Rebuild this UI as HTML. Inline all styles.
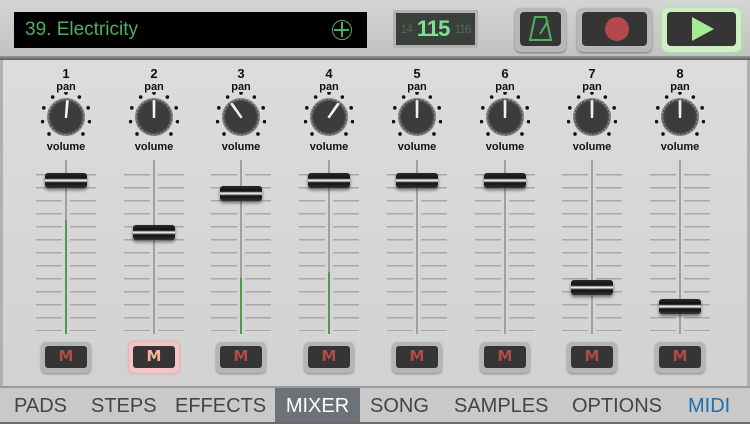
<!DOCTYPE html>
<html><head><meta charset="utf-8"><style>
*{margin:0;padding:0;box-sizing:border-box}
body{width:750px;height:422px;overflow:hidden;background:#6a6a6a;font-family:"Liberation Sans",sans-serif;position:relative}
#top{position:absolute;left:0;top:0;width:750px;height:58px;background:linear-gradient(#d4d4d4,#c2c2c2);border-bottom:2px solid #8a8a8a}
#name{position:absolute;left:14px;top:12px;width:353px;height:36px;background:#000;color:#4fae62;font-size:19px;line-height:36px;padding-left:11px}
#plus{position:absolute;right:15px;top:8px;width:20px;height:20px;border:1.5px solid #4fae62;border-radius:50%}
#plus:before{content:"";position:absolute;left:8px;top:1px;width:1.5px;height:15px;background:#4fae62}
#plus:after{content:"";position:absolute;top:8px;left:1px;height:1.5px;width:15px;background:#4fae62}
#bpm{position:absolute;left:393px;top:10px;width:85px;height:38px;background:#b2b2b2;border-radius:2px}
#bpm div{position:absolute;left:3px;top:3px;right:3px;bottom:3px;background:#3a3f3c;color:#7de28f;font-family:"Liberation Sans",sans-serif;text-align:center;line-height:32px;font-size:22px;font-weight:bold;white-space:nowrap;letter-spacing:-1px}
#bpm span{font-size:12px;color:#4a6a52;font-weight:normal;vertical-align:3px}
.btn{position:absolute;top:8px;height:44px;border-radius:6px;background:#b8b8b8;box-shadow:0 1px 2px #777}
.btn div{position:absolute;left:5px;top:4px;right:5px;bottom:6px;background:#353535;border-radius:4px}
#main{position:absolute;left:0;top:60px;width:750px;height:326px;background:linear-gradient(#dcdcdc,#d2d2d2);border-left:3px solid #b0b0b0;border-right:3px solid #b0b0b0}
.ch{position:absolute;top:0;width:88px;height:326px}
.num{position:absolute;width:88px;text-align:center;top:6px;font-weight:bold;font-size:13px;color:#111}
.pan{position:absolute;width:88px;text-align:center;top:21px;font-weight:bold;font-size:11px;color:#111}
.vol{position:absolute;width:88px;text-align:center;top:81px;font-weight:bold;font-size:11px;color:#111}
.knob{position:absolute;left:19px;top:32px}
.ticks{position:absolute;top:103px;height:168px;width:26px;background:repeating-linear-gradient(to bottom,transparent 0,transparent 11px,#a8a8a8 11px,#a8a8a8 12.5px,transparent 12.5px,transparent 13px)}
.track{position:absolute;left:43px;top:100px;width:2px;height:174px;background:#a0a0a0}
.lvl{position:absolute;left:43px;width:2px;background:#4e9a50;bottom:52px}
.cap{position:absolute;left:23px;width:42px;height:15px;border-radius:3px;background:linear-gradient(#2a2a2a,#111 35%,#999 42%,#fff 50%,#888 58%,#111 66%,#333);box-shadow:0 2px 3px rgba(0,0,0,.5)}
.m{position:absolute;left:19px;top:282px;width:50px;height:31px;border-radius:5px;background:#b5b5b5;box-shadow:0 1px 2px #888}
.m div{position:absolute;left:4px;top:4px;right:4px;bottom:5px;background:#353535;border-radius:3px;color:#b04c48;font-weight:bold;font-size:15px;text-align:center;line-height:21px;font-family:"DejaVu Sans","Liberation Sans",sans-serif}
.m.on{background:#f2c6c2;box-shadow:0 0 3px #e88}
.m.on div{color:#f1b896}
#tabs{position:absolute;left:0;top:386px;width:750px;height:36px;background:#c9c9c9;border-top:2px solid #9a9a9a}
#tabs span{position:absolute;top:0;height:34px;line-height:36px;font-size:20px;color:#444;}
</style></head><body>
<div id="top">
 <div id="name">39. Electricity<div id="plus"></div></div>
 <div id="bpm"><div><span>14</span> 115 <span>116</span></div></div>
 <div class="btn" style="left:515px;width:51px"><div><svg width="41" height="34" style="position:absolute;left:0;top:0"><path d="M15 5 L26 5 L31 28 L10 28 Z M20 22 L28 9" fill="none" stroke="#4fae62" stroke-width="2"/></svg></div></div>
 <div class="btn" style="left:577px;width:75px"><div><div style="position:absolute;left:23px;top:5px;width:24px;height:24px;border-radius:50%;background:#b5484a"></div></div></div>
 <div class="btn" style="left:662px;width:79px;background:#cfeec4;box-shadow:0 0 5px #aee89a"><div><svg width="69" height="34" style="position:absolute;left:0;top:0"><path d="M25 5 L47 17 L25 29 Z" fill="#a3ea94"/></svg></div></div>
</div>
<div id="main"></div>
<div id="tabs">
 <span style="left:14px">PADS</span><span style="left:91px">STEPS</span><span style="left:175px">EFFECTS</span>
 <span style="left:275px;width:85px;background:#6d7178;color:#fff;text-align:center">MIXER</span>
 <span style="left:370px">SONG</span><span style="left:454px">SAMPLES</span><span style="left:572px">OPTIONS</span><span style="left:688px;color:#1c6fae">MIDI</span>
</div>
<script>
var cx=[66,154,241,329,417,505,592,680],cap=[180,232,193,180,180,180,287,306],ang=[5,0,-35,35,0,0,0,0],lvl=[220,0,278,272,0,0,0,0];
var main=document.getElementById('main'),h='';
for(var i=0;i<8;i++){
 var l=cx[i]-44-3;
 var dots='';for(var k=0;k<9;k++){var a=(-135+k*33.75)*Math.PI/180;dots+='<circle cx="'+(25+24*Math.sin(a))+'" cy="'+(25-24*Math.cos(a))+'" r="1.8" fill="#111"/>';}
 var knob='<svg class="knob" width="50" height="50">'+dots+'<circle cx="25" cy="25" r="19" fill="#777"/><circle cx="25" cy="25" r="18" fill="#555" stroke="#888" stroke-width="2" stroke-dasharray="2 2"/><circle cx="25" cy="25" r="16" fill="#3c3c3c"/><path d="M23.8 26 L23.6 9 Q25 7 26.4 9 L26.2 26 Z" fill="#f2f2f2" transform="rotate('+ang[i]+' 25 25)"/></svg>';
 h+='<div class="ch" style="left:'+l+'px"><div class="num">'+(i+1)+'</div><div class="pan">pan</div>'+knob+'<div class="vol">volume</div>'+
 '<div class="ticks" style="left:14px"></div><div class="ticks" style="left:48px"></div><div class="track"></div>'+
 (lvl[i]?'<div class="lvl" style="top:'+(lvl[i]-60)+'px"></div>':'')+
 '<div class="cap" style="top:'+(cap[i]-60-7)+'px"></div><div class="m'+(i==1?' on':'')+'"><div>M</div></div></div>';
}
main.innerHTML=h;
</script>
</body></html>
